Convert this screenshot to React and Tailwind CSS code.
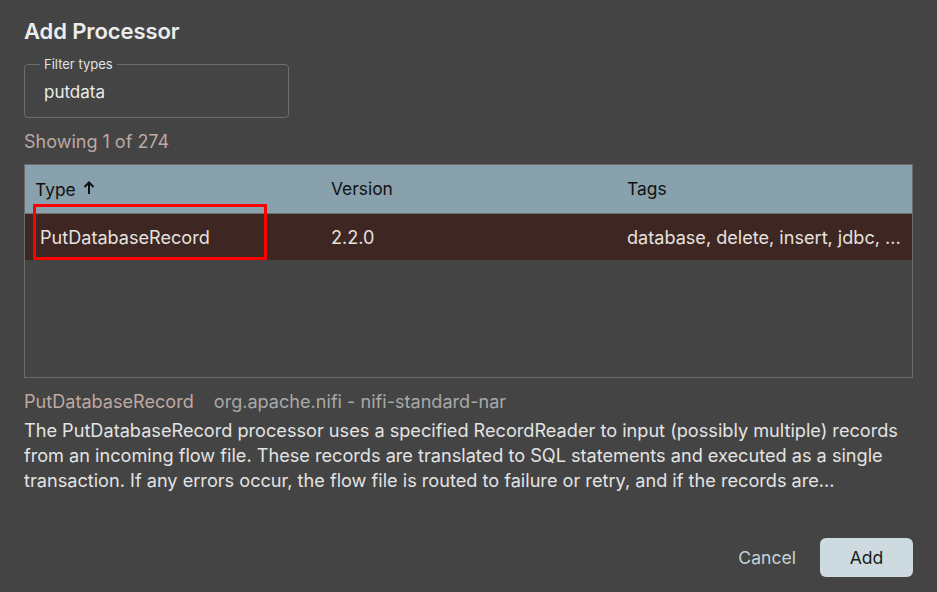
import React from 'react';

const rows = [
  { type: 'PutDatabaseRecord', version: '2.2.0', tags: 'database, delete, insert, jdbc, ...' },
];

export default function App() {
  return (
    <div className="w-[937px] h-[592px] bg-[#444444] text-[#e3e3e3] font-['Inter',sans-serif] px-6 pt-[16px] flex flex-col overflow-hidden">
      <h1 className="text-[22px] leading-[30px] font-semibold text-[#ececec] tracking-[-0.1px]">Add Processor</h1>

      {/* filter field */}
      <div className="relative mt-[18px] w-[265px] h-[54px] border border-[#6e6e6e] rounded-[4px] flex items-center px-[19px]">
        <span className="absolute -top-[8px] left-[15px] px-[4px] bg-[#444444] text-[13px] leading-[14px] text-[#e0e0e0]">Filter types</span>
        <span className="text-[17px] leading-[20px] text-[#ececec] mt-[1px]">putdata</span>
      </div>

      <div className="mt-[13px] text-[18px] leading-[22px] text-[#bda8a2]">Showing 1 of 274</div>

      {/* table */}
      <div className="relative mt-[11px] h-[214px] border border-[#6a6a6a] bg-[#444444]">
        <div className="grid grid-cols-[296px_296px_1fr] h-[49px] bg-[#88a1ad] border-b border-[#707070] text-[#111] text-[17.4px] items-center">
          <div className="pl-[10px] flex items-center gap-[7px] pt-[3px]">
            Type
            <svg width="12" height="14" viewBox="0 0 12 14" className="mb-[4px]">
              <path d="M6 13V2M1.5 6L6 1.5 10.5 6" stroke="#111" strokeWidth="2" fill="none" />
            </svg>
          </div>
          <div className="pl-[10px] pt-[1px]">Version</div>
          <div className="pl-[10px] pt-[1px]">Tags</div>
        </div>
        {rows.map((r) => (
          <div key={r.type} className="grid grid-cols-[296px_296px_1fr] h-[46px] pt-[1px] bg-[#3e2723] text-[18.1px] items-center text-[#e6e1df]">
            <div className="pl-[15px]">{r.type}</div>
            <div className="pl-[10px]">{r.version}</div>
            <div className="pl-[10px]">{r.tags}</div>
          </div>
        ))}
        {/* annotation box */}
        <div className="absolute left-[8px] top-[39px] w-[234px] h-[56px] border-[3px] border-[#ff0000] rounded-[1px]" />
      </div>

      <div className="mt-[12px] flex items-center gap-[20px] text-[18.1px] leading-[22px]">
        <span className="text-[#bda8a2]">PutDatabaseRecord</span>
        <span className="text-[#a9a9a9]">org.apache.nifi - nifi-standard-nar</span>
      </div>
      <p className="mt-[6px] text-[18.15px] leading-[25px] text-[#e3e3e3]">
        The PutDatabaseRecord processor uses a specified RecordReader to input (possibly multiple) records from an incoming flow file. These records are translated to SQL statements and executed as a single transaction. If any errors occur, the flow file is routed to failure or retry, and if the records are...
      </p>

      <div className="mt-auto mb-[15px] flex justify-end items-center gap-[24px]">
        <button className="text-[17.6px] text-[#c6d2d8] px-0 mt-[2px]">Cancel</button>
        <button className="w-[93px] h-[39px] rounded-[6px] bg-[#cddae0] text-[#1c1c1c] text-[17.6px] pt-[1px]">Add</button>
      </div>
    </div>
  );
}
